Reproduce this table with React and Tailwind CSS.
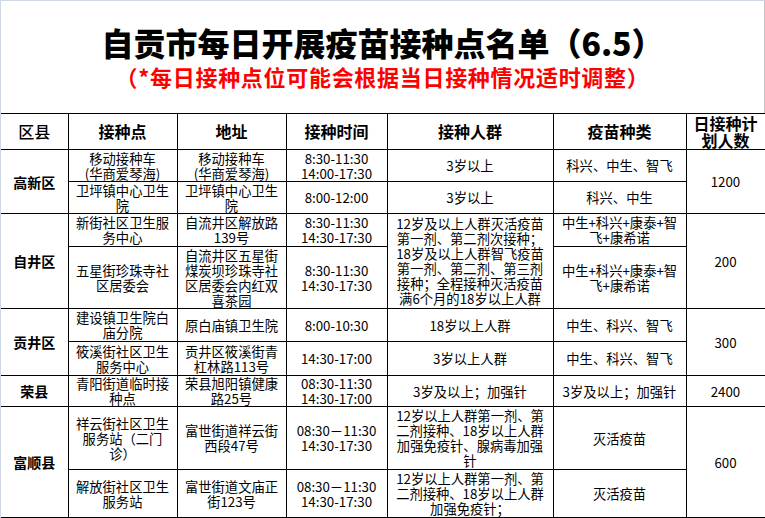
import React from "react";

const F = { fontFamily: '"Noto Sans CJK SC", "Noto Sans", sans-serif' };

function Lines({ t }) {
  const parts = t.split("/");
  return (
    <>
      {parts.map((p, i) => (
        <div key={i} className="whitespace-nowrap">{p}</div>
      ))}
    </>
  );
}

function C({ t, rs, cls = "" }) {
  return (
    <td
      rowSpan={rs}
      className={"border border-black p-0 px-[1px] text-center align-middle text-[13.3px] leading-[15px] text-black " + cls}
    >
      <Lines t={t} />
    </td>
  );
}

function D({ t, rs }) {
  return (
    <td
      rowSpan={rs}
      className="border border-black border-l-0 p-0 text-center align-middle text-[14px] font-bold leading-[16px] text-black"
    >
      {t}
    </td>
  );
}

function H({ t, cls = "" }) {
  return (
    <th
      className={"border border-black p-0 text-center align-middle text-[16px] font-bold leading-[17px] text-black " + cls}
    >
      <Lines t={t} />
    </th>
  );
}

export default function App() {
  return (
    <div
      className="w-[765px] h-[518px] overflow-hidden bg-white border-t border-l border-[#cfd6e4]"
      style={F}
    >
      <div className="h-[112px] flex flex-col items-center border-r border-[#c4c4c4]">
        <div className="pt-[23px] text-[32px] leading-[36px] font-black text-black whitespace-nowrap">
          自贡市每日开展疫苗接种点名单（6.5）
        </div>
        <div className="mt-[3px] text-[22px] leading-[27px] tracking-[0.7px] font-bold text-[#ff0000] whitespace-nowrap">
          （*每日接种点位可能会根据当日接种情况适时调整）
        </div>
      </div>
      <table className="table-fixed border-collapse w-[764px]">
        <colgroup>
          <col className="w-[67px]" />
          <col className="w-[109px]" />
          <col className="w-[109px]" />
          <col className="w-[101px]" />
          <col className="w-[166px]" />
          <col className="w-[133px]" />
          <col className="w-[79px]" />
        </colgroup>
        <tbody>
          <tr className="h-[36px]">
            <H t="区县" cls="border-l-0 font-medium" />
            <H t="接种点" />
            <H t="地址" />
            <H t="接种时间" />
            <H t="接种人群" />
            <H t="疫苗种类" />
            <H t="日接种计/划人数" />
          </tr>
          <tr className="h-[32px]">
            <D t="高新区" rs={2} />
            <C t="移动接种车/(华商爱琴海)" />
            <C t="移动接种车/(华商爱琴海)" />
            <C t="8:30-11:30/14:00-17:30" />
            <C t="3岁以上" />
            <C t="科兴、中生、智飞" />
            <C t="1200" rs={2} />
          </tr>
          <tr className="h-[32px]">
            <C t="卫坪镇中心卫生/院" />
            <C t="卫坪镇中心卫生/院" />
            <C t="8:00-12:00" />
            <C t="3岁以上" />
            <C t="科兴、中生" />
          </tr>
          <tr className="h-[33px]">
            <D t="自井区" rs={2} />
            <C t="新街社区卫生服/务中心" />
            <C t="自流井区解放路/139号" />
            <C t="8:30-11:30/14:30-17:30" />
            <C
              t="12岁及以上人群灭活疫苗/第一剂、第二剂次接种；/18岁及以上人群智飞疫苗/第一剂、第二剂、第三剂/接种；全程接种灭活疫苗/满6个月的18岁以上人群"
              rs={2}
            />
            <C t="中生+科兴+康泰+智/飞+康希诺" />
            <C t="200" rs={2} />
          </tr>
          <tr className="h-[62px]">
            <C t="五星街珍珠寺社/区居委会" />
            <C t="自流井区五星街/煤炭坝珍珠寺社/区居委会内红双/喜茶园" />
            <C t="8:30-11:30/14:30-17:30" />
            <C t="中生+科兴+康泰+智/飞+康希诺" />
          </tr>
          <tr className="h-[33px]">
            <D t="贡井区" rs={2} />
            <C t="建设镇卫生院白/庙分院" />
            <C t="原白庙镇卫生院" />
            <C t="8:00-10:30" />
            <C t="18岁以上人群" />
            <C t="中生、科兴、智飞" />
            <C t="300" rs={2} />
          </tr>
          <tr className="h-[34px]">
            <C t="筱溪街社区卫生/服务中心" />
            <C t="贡井区筱溪街青/杠林路113号" />
            <C t="14:30-17:00" />
            <C t="3岁以上人群" />
            <C t="中生、科兴、智飞" />
          </tr>
          <tr className="h-[31px]">
            <D t="荣县" />
            <C t="青阳街道临时接/种点" />
            <C t="荣县旭阳镇健康/路25号" />
            <C t="08:30-11:30/14:30-17:00" />
            <C t="3岁及以上；加强针" />
            <C t="3岁及以上；加强针" />
            <C t="2400" />
          </tr>
          <tr className="h-[63px]">
            <D t="富顺县" rs={2} />
            <C t="祥云街社区卫生/服务站（二门/诊）" />
            <C t="富世街道祥云街/西段47号" />
            <C t="08:30－11:30/14:30-17:30" />
            <C t="12岁以上人群第一剂、第/二剂接种、18岁以上人群/加强免疫针、腺病毒加强/针" />
            <C t="灭活疫苗" />
            <C t="600" rs={2} />
          </tr>
          <tr className="h-[48px]">
            <C t="解放街社区卫生/服务站" />
            <C t="富世街道文庙正/街123号" />
            <C t="08:30－11:30/14:30-17:30" />
            <C t="12岁以上人群第一剂、第/二剂接种、18岁以上人群/加强免疫针；" />
            <C t="灭活疫苗" />
          </tr>
        </tbody>
      </table>
    </div>
  );
}
